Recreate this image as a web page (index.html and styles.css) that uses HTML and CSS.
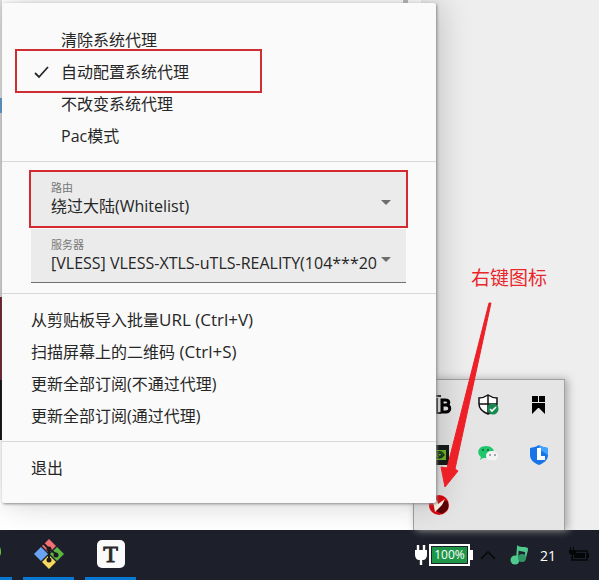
FILE: index.html
```html
<!DOCTYPE html>
<html lang="zh-CN">
<head>
<meta charset="utf-8">
<title>系统代理</title>
<link rel="stylesheet" href="styles.css">
</head>
<body>
<main class="desktop">
  <div class="page-window"></div>
  <div class="window-edge"></div>
  <div class="side-window"></div>

  <section class="tray" aria-label="托盘图标">
    <button class="tray-item" aria-label="B"><svg width="30" height="24" viewBox="0 0 30 24"><path d="M4 3h13M13 5v15h4" stroke="#333" stroke-width="2" fill="none"/><path d="M18 7h3c5 0 5 5 0 5h-3zm0 5h4c5 0 5 7 0 7h-4z" fill="none" stroke="#000" stroke-width="3"/></svg></button>
    <button class="tray-item" aria-label="安全中心"><svg width="24" height="24" viewBox="0 0 24 24"><path d="M11 2c3 2 6 3 9 3v6c0 5-4 8-9 10-5-2-9-5-9-10V5c3 0 6-1 9-3z" fill="#fff" stroke="#111" stroke-width="1.5"/><path d="M11 2v19M2 11h18" stroke="#111" stroke-width="1.5"/><circle cx="16" cy="16" r="5.5" fill="#158a50"/><path d="m13 16 2 2 4-4" fill="none" stroke="#fff" stroke-width="1.6"/></svg></button>
    <button class="tray-item" aria-label="书签"><svg width="24" height="24" viewBox="0 0 24 24"><path d="M5 3h6v6H5zM12 3h6v6h-6zM5 10h13v11l-6-6h-1l-6 6z" fill="#000"/></svg></button>
    <button class="tray-item" aria-label="NVIDIA"><svg width="24" height="24" viewBox="0 0 24 24"><path d="M2 2h20v20H2z" fill="#171c19"/><path d="M4 7h15v10H4z" fill="#72b52c"/><path d="M7 12c3-5 8-4 10 0-3 4-7 4-10 0zm3 0c2-3 4-2 5 0-2 2-3 2-4 0" fill="none" stroke="#17351b" stroke-width="1.3"/></svg></button>
    <button class="tray-item" aria-label="微信"><svg width="24" height="24" viewBox="0 0 24 24"><path d="M9 3c5 0 8 3 8 6s-3 6-8 6l-3 0-3 2 1-3C-1 10 1 3 9 3z" fill="#20c66b"/><path d="M15 8c4 0 6 2 6 5 0 1-1 3-2 3v2l-2-1c-5 1-8-1-8-4s2-5 6-5z" fill="#f3f3f3"/><g fill="#145e3b"><circle cx="6" cy="7" r="1"/><circle cx="11" cy="7" r="1"/></g><g fill="#8b8b8b"><circle cx="13" cy="12" r="1"/><circle cx="18" cy="12" r="1"/></g></svg></button>
    <button class="tray-item" aria-label="联想"><svg width="24" height="24" viewBox="0 0 24 24"><path d="M12 2c3 2 6 2 9 3v7c0 5-4 8-9 10-5-2-9-5-9-10V5c3-1 6-1 9-3z" fill="#1875e7"/><path d="M12 2c3 2 6 2 9 3v7l-9-6z" fill="#40a4ff"/><path d="M12 5v10h6" fill="none" stroke="#fff" stroke-width="4"/></svg></button>
    <button class="tray-item" aria-label="v2rayN"><svg width="24" height="24" viewBox="0 0 24 24"><circle cx="12" cy="12" r="10" fill="#d90910"/><path d="m9 18 8-11 4 2v7l-6 5z" fill="#5c0408"/><path d="m6 8 4-1 1 4 7-5-3 6-7 7z" fill="#fff5e7"/></svg></button>
  </section>

  <section class="menu" aria-label="系统代理菜单">
    <div class="menu-group proxy-group">
      <button class="menu-item">清除系统代理</button>
      <button class="menu-item selected"><svg class="check" width="18" height="16" viewBox="0 0 18 16"><path d="m2 9 4 4L15 3" fill="none" stroke="#292929" stroke-width="1.8"/></svg>自动配置系统代理</button>
      <button class="menu-item">不改变系统代理</button>
      <button class="menu-item">Pac模式</button>
    </div>
    <div class="fields">
      <div class="field highlighted">
        <label for="route">路由</label>
        <select id="route"><option>绕过大陆(Whitelist)</option></select>
        <svg class="caret" width="10" height="5" viewBox="0 0 10 5"><path d="M0 0h10L5 5z" fill="#6e6e6e"/></svg>
      </div>
      <div class="field">
        <label for="server">服务器</label>
        <select id="server"><option>[VLESS] VLESS-XTLS-uTLS-REALITY(104***20</option></select>
        <svg class="caret" width="10" height="5" viewBox="0 0 10 5"><path d="M0 0h10L5 5z" fill="#6e6e6e"/></svg>
      </div>
    </div>
    <div class="menu-group">
      <button class="menu-item">从剪贴板导入批量<span class="latin">URL (Ctrl+V)</span></button>
      <button class="menu-item">扫描屏幕上的二维码<span class="latin"> (Ctrl+S)</span></button>
      <button class="menu-item">更新全部订阅(不通过代理)</button>
      <button class="menu-item">更新全部订阅(通过代理)</button>
    </div>
    <div class="menu-group">
      <button class="menu-item">退出</button>
    </div>
  </section>

  <div class="callout">右键图标</div>
  <svg class="arrow" width="60" height="190" viewBox="0 0 60 190"><path d="M49 3h2L15 169l3 2L5 187 1 167l6 1z" fill="#ed2027" stroke="#ed2027" stroke-width="1"/></svg>
</main>

<footer class="taskbar">
  <div class="apps">
    <button class="app app-edge" aria-label="应用"><svg width="12" height="30" viewBox="0 0 12 30"><path d="M0 8q2 5 0 9z" fill="#62d43d"/></svg></button>
    <button class="app" aria-label="Git"><svg width="32" height="32" viewBox="0 0 32 32"><path d="m16 1 7 7-7 7-7-7z" fill="#f46f73"/><path d="m8 9 7 7-7 7-7-7z" fill="#69a3f3"/><path d="m24 9 7 7-7 7-7-7z" fill="#5db642"/><path d="m16 17 7 7-7 7-7-7z" fill="#f8d95b"/><path d="m10 5 6 6v11M16 11l7 5" fill="none" stroke="#1b1c20" stroke-width="2"/><g fill="#1b1c20"><circle cx="16" cy="11" r="2.5"/><circle cx="16" cy="22" r="2.5"/><circle cx="23" cy="17" r="2.5"/></g></svg></button>
    <button class="app" aria-label="Typora"><span class="typora">T</span></button>
  </div>
  <div class="status">
    <svg class="plug" width="14" height="22" viewBox="0 0 14 22"><path d="M4 1v6M10 1v6M7 13v8" stroke="#fff" stroke-width="2.4"/><path d="M1 6h12v5c0 3-2 5-4 5H5c-2 0-4-2-4-5z" fill="#fff"/></svg>
    <span class="battery">100%</span>
    <svg class="chevron" width="18" height="12" viewBox="0 0 18 12"><path d="m2 10 7-7 7 7" fill="none" stroke="#08090b" stroke-width="1.6"/></svg>
    <svg class="music" width="20" height="22" viewBox="0 0 20 22"><path d="m7 15 1-12" fill="none" stroke="#4fc98d" stroke-width="2"/><path d="M7 1c3 3 7 1 11 3l-1 5c-3-2-6-1-10-3z" fill="#4fc98d"/><path d="m17 5-2 9" stroke="#4fc98d" stroke-width="2"/><circle cx="5" cy="16" r="4.5" fill="#4fc98d"/><circle cx="12" cy="14" r="4" fill="#329565"/></svg>
    <span class="number">21</span>
    <svg class="power" width="22" height="18" viewBox="0 0 22 18"><path d="M8 5h11v9H4v-4" fill="none" stroke="#050608" stroke-width="1.3"/><path d="M8 7h9v5H6v-3zM19 7h2v5h-2zM1 4h7v3L6 9H3L1 7zM2 1h1v3H2zM5 1h1v3H5zM4 9h1v5H4z" fill="#050608"/></svg>
  </div>
</footer>
</body>
</html>
```
FILE: styles.css
```css
*, *::after { box-sizing: border-box; }

body {
  margin: 0;
  min-height: 100vh;
  display: flex;
  flex-direction: column;
  overflow: hidden;
  font-family: "Open Sans", "Noto Sans CJK SC", sans-serif;
  color: #262626;
}

button, select {
  border: 0;
  background: none;
  font: inherit;
  color: inherit;
}

svg { display: block; flex-shrink: 0; }

.desktop {
  position: relative;
  flex: 1;
  background: #fff;
}

.page-window {
  position: absolute;
  top: 0;
  bottom: 0;
  left: 0;
  width: 2px;
  background: linear-gradient(#ddd 98px, #5f94cc 98px 113px, #d2d2d2 113px 297px, #702333 297px 380px, #111 380px 440px, #fff 440px);
}

.window-edge {
  position: absolute;
  top: 0;
  left: 403px;
  width: 5px;
  height: 10px;
  background: #bbb;
}

.side-window {
  position: absolute;
  top: 0;
  right: 0;
  bottom: 0;
  left: 421px;
  background: #eee;
}

.tray {
  position: absolute;
  left: 413px;
  bottom: 0;
  width: 152px;
  height: 151px;
  display: grid;
  grid-template-columns: repeat(3, 50px);
  grid-template-rows: repeat(3, 50px);
  background: #e5e5e5;
  border: 1px solid #a0a0a0;
  border-bottom: 0;
  box-shadow: 3px 0 8px #aaa;
}

.tray-item {
  display: grid;
  place-items: center;
  padding: 0;
}

.menu {
  position: absolute;
  top: 3px;
  left: 2px;
  width: 434px;
  padding: 14px 0 10px;
  background: #fafafa;
  border-radius: 2px;
  box-shadow: 1px 1px 3px #888, 4px 0 32px #0003;
}

.menu-group { padding: 10px 0 9px; }

.menu-group.proxy-group { padding-top: 7px; }

.menu-group + .menu-group,
.fields,
.fields + .menu-group { border-top: 1px solid #d9d9d9; }

.menu-item {
  position: relative;
  display: block;
  width: 100%;
  height: 32px;
  padding: 0 29px;
  font-size: 16px;
  line-height: 32px;
  text-align: left;
  white-space: nowrap;
}

.latin { font-size: 17px; }

.proxy-group .menu-item { padding-left: 59px; }

.selected::after {
  content: "";
  position: absolute;
  top: -7px;
  left: 13px;
  width: 247px;
  height: 44px;
  border: 2px solid #cf2e35;
}

.check {
  position: absolute;
  top: 8px;
  left: 31px;
}

.fields {
  display: flex;
  flex-direction: column;
  gap: 3px;
  padding: 10px 30px 10px 29px;
}

.field {
  position: relative;
  height: 54px;
  padding: 10px 20px 8px;
  background: #ebebeb;
  border-bottom: 1px solid #707070;
}

.field label {
  display: block;
  font-size: 11px;
  line-height: 12px;
  color: #777;
}

.field select {
  display: block;
  appearance: none;
  width: 100%;
  height: 24px;
  padding: 0;
  font-size: 16px;
  line-height: 24px;
  outline: 0;
}

.highlighted { border-color: transparent; }

.highlighted::after {
  content: "";
  position: absolute;
  inset: -2px -2px -3px;
  border: 2px solid #d4292f;
}

.caret {
  position: absolute;
  top: 28px;
  right: 15px;
}

.callout {
  position: absolute;
  top: 264px;
  left: 471px;
  font-size: 19px;
  line-height: 28px;
  color: #e9262b;
}

.arrow {
  position: absolute;
  top: 300px;
  left: 440px;
}

.taskbar {
  height: 50px;
  display: flex;
  justify-content: space-between;
  background: #1d202a;
  color: #fff;
}

.apps { display: flex; gap: 11px; }

.app {
  width: 51px;
  padding: 0;
  display: grid;
  place-items: center;
  border-bottom: 3px solid #0878d2;
}

.app-edge { width: 12px; }

.typora {
  width: 28px;
  height: 28px;
  border-radius: 5px;
  background: #fafafa;
  color: #292929;
  font: 24px/28px "Liberation Serif", serif;
  -webkit-text-stroke: 1px #292929;
  text-align: center;
}

.status {
  display: flex;
  align-items: center;
  padding-right: 9px;
}

.battery {
  position: relative;
  width: 41px;
  height: 22px;
  margin: 0 9px 0 1px;
  border: 2px solid #fff;
  background: #1d9648;
  box-shadow: inset 0 0 0 1px #1d202a;
  font-size: 12px;
  line-height: 18px;
  text-align: center;
}

.battery::after {
  content: "";
  position: absolute;
  top: 4px;
  right: -5px;
  width: 3px;
  height: 10px;
  background: #fff;
}

.music { margin: 0 10px 0 13px; }
.number { margin-right: 12px; font-size: 14px; }
```
